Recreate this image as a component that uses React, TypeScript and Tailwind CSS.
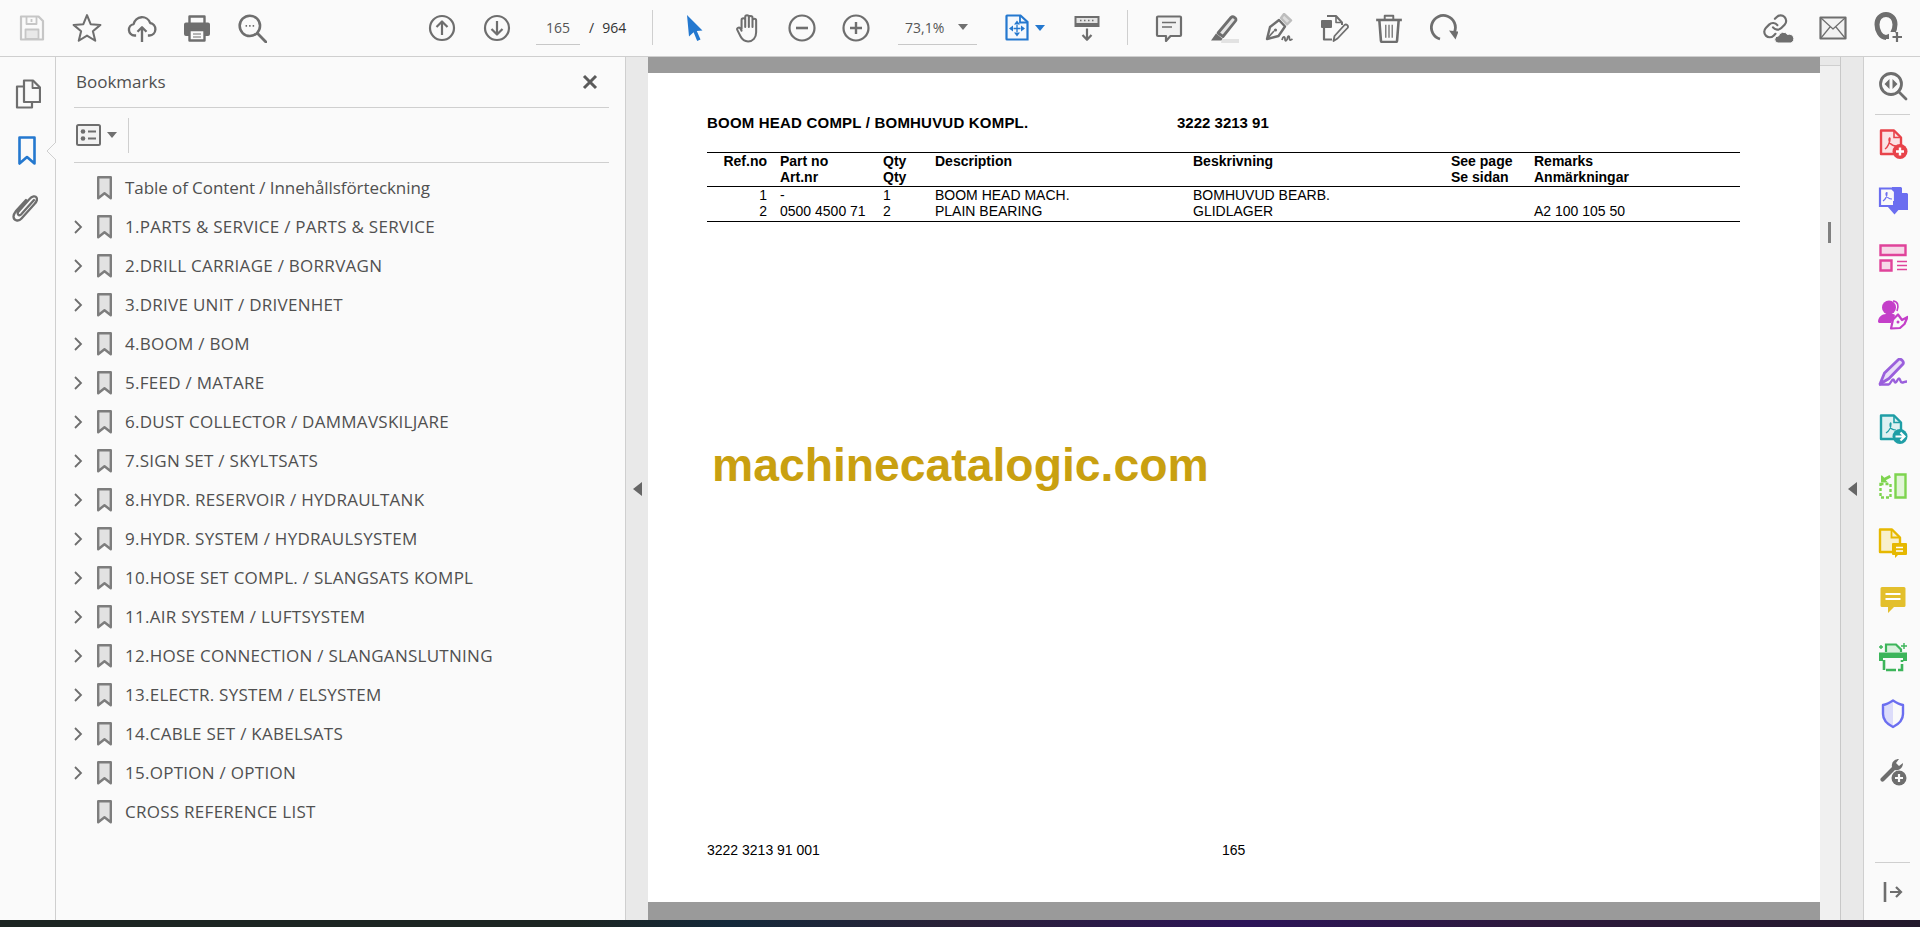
import type { ReactNode } from "react";

const G = "#6e6e6e";

function Ico({ children, size = 28 }: { children: ReactNode; size?: number }) {
	return (
		<svg width={size} height={size} viewBox="0 0 28 28" fill="none" stroke={G} strokeWidth="2" strokeLinejoin="round">
			{children}
		</svg>
	);
}

function Cell({ children, w = "w-[55px]" }: { children: ReactNode; w?: string }) {
	return <div className={`${w} flex shrink-0 items-center justify-center`}>{children}</div>;
}

function Caret({ color = "#707070" }: { color?: string }) {
	return (
		<svg width="10" height="6" viewBox="0 0 10 6">
			<path d="M0 0h10L5 6z" fill={color} />
		</svg>
	);
}

function Triangle() {
	return (
		<svg width="9" height="14" viewBox="0 0 9 14">
			<path d="M9 0v14L0 7z" fill="#666" />
		</svg>
	);
}

function BookmarkIcon() {
	return (
		<svg width="15" height="24" viewBox="0 0 15 24">
			<path d="M1.200 1.200h12.600v21l-6.300-5-6.300 5z" fill="#e2e2e2" stroke="#7d7d7d" strokeWidth="2.400" strokeLinejoin="round" />
		</svg>
	);
}

const bookmarks: { label: string; expand: boolean }[] = [
	{ label: "Table of Content / Innehållsförteckning", expand: false },
	{ label: "1.PARTS & SERVICE / PARTS & SERVICE", expand: true },
	{ label: "2.DRILL CARRIAGE / BORRVAGN", expand: true },
	{ label: "3.DRIVE UNIT / DRIVENHET", expand: true },
	{ label: "4.BOOM / BOM", expand: true },
	{ label: "5.FEED / MATARE", expand: true },
	{ label: "6.DUST COLLECTOR / DAMMAVSKILJARE", expand: true },
	{ label: "7.SIGN SET / SKYLTSATS", expand: true },
	{ label: "8.HYDR. RESERVOIR / HYDRAULTANK", expand: true },
	{ label: "9.HYDR. SYSTEM / HYDRAULSYSTEM", expand: true },
	{ label: "10.HOSE SET COMPL. / SLANGSATS KOMPL", expand: true },
	{ label: "11.AIR SYSTEM / LUFTSYSTEM", expand: true },
	{ label: "12.HOSE CONNECTION / SLANGANSLUTNING", expand: true },
	{ label: "13.ELECTR. SYSTEM / ELSYSTEM", expand: true },
	{ label: "14.CABLE SET / KABELSATS", expand: true },
	{ label: "15.OPTION / OPTION", expand: true },
	{ label: "CROSS REFERENCE LIST", expand: false },
];

function Toolbar() {
	return (
		<header className="flex h-[57px] shrink-0 items-center border-b border-[#cfcfcf] bg-[#fafafa] pb-[1px] pl-[4px]">
			<Cell>
				<Ico>
					<path d="M3 2.500h17.500l4.500 4.500v18.500H3z" stroke="#c6c6c6" strokeWidth="2.200" />
					<path d="M8.500 3v7h10V3M13.500 5v3" stroke="#c6c6c6" strokeWidth="1.800" />
					<path d="M7.500 15.500h13V25h-13z" fill="#e8e8e8" stroke="#c6c6c6" strokeWidth="1.800" />
				</Ico>
			</Cell>
			<Cell>
				<Ico size={30}>
					<path d="M14 2l3.400 8.400 9.100.7-7 5.900 2.200 8.900L14 21.100 6.300 25.900l2.200-8.900-7-5.900 9.100-.7z" strokeWidth="1.900" />
				</Ico>
			</Cell>
			<Cell>
				<Ico size={30}>
					<path d="M8.500 21H7a5.400 5.400 0 0 1-.8-10.700A8 8 0 0 1 21.600 9.300 5.900 5.900 0 0 1 21 21h-1.500" strokeWidth="2.200" />
					<path d="M14 27V13.500M9.800 17.500l4.200-4.200 4.200 4.200" strokeWidth="2.200" />
				</Ico>
			</Cell>
			<Cell>
				<Ico>
					<path d="M6.500 9V2.500h15V9" strokeWidth="2.400" />
					<path d="M3 8.500h22a2 2 0 0 1 2 2V20a2 2 0 0 1-2 2h-3v-6H6v6H3a2 2 0 0 1-2-2v-9.500a2 2 0 0 1 2-2z" fill={G} stroke="none" />
					<path d="M6.500 16h15v10.500h-15z" fill="#fafafa" strokeWidth="2.400" />
					<path d="M10 20h8M10 23h8" strokeWidth="1.200" />
				</Ico>
			</Cell>
			<Cell>
				<Ico size={30}>
					<circle cx="12" cy="12" r="9.500" strokeWidth="2.400" />
					<path d="M19 19l8 8" strokeWidth="2.600" strokeLinecap="round" />
					<path d="M8 12h1.400M11.300 12h1.400M14.600 12h1.400" strokeWidth="1.600" />
				</Ico>
			</Cell>
			<div className="w-[135px] shrink-0" />
			<Cell>
				<Ico>
					<circle cx="14" cy="14" r="12" strokeWidth="2.200" />
					<path d="M14 21V7.500M8.500 13L14 7.500l5.500 5.500" strokeWidth="2.200" />
				</Ico>
			</Cell>
			<Cell>
				<Ico>
					<circle cx="14" cy="14" r="12" strokeWidth="2.200" />
					<path d="M14 7v13.500M8.500 15l5.500 5.500 5.500-5.500" strokeWidth="2.200" />
				</Ico>
			</Cell>
			<div className="ml-[12px] flex h-[35px] w-[44px] shrink-0 items-center justify-center border-b border-[#c8c8c8] text-[14px] text-[#555]">165</div>
			<div className="flex w-[72px] shrink-0 items-center pl-[9px] text-[14px] text-[#333]">
				<span>/</span>
				<span className="ml-[8px]">964</span>
			</div>
			<div className="h-[35px] w-px shrink-0 bg-[#cfcfcf]" />
			<div className="w-[14px] shrink-0" />
			<Cell w="w-[54px]">
				<svg width="28" height="28" viewBox="0 0 28 28">
					<path d="M7 1l15.500 15.500-5.700.5 3.700 8.500-3.300 1.500-3.600-8.700L9 22.500z" fill="#2478cf" />
				</svg>
			</Cell>
			<Cell w="w-[54px]">
				<svg width="30" height="30" viewBox="0 0 28 28" fill="none" stroke={G} strokeWidth="1.900" strokeLinecap="round" strokeLinejoin="round">
					<path d="M8 15V6.500a1.700 1.700 0 0 1 3.400 0V13M11.400 13V3.700a1.700 1.700 0 0 1 3.400 0V13M14.800 13V4.500a1.700 1.700 0 0 1 3.400 0V13M18.200 13V7a1.700 1.700 0 0 1 3.400 0v11c0 5-3 8.500-7.500 8.500-3.500 0-5.500-1.500-7-4.500l-3-6c-1-2 1.500-3.200 2.700-1.700L8 16.500" />
				</svg>
			</Cell>
			<Cell w="w-[54px]">
				<Ico>
					<circle cx="14" cy="14" r="12.500" strokeWidth="2.200" />
					<path d="M8 14h12" strokeWidth="2.600" />
				</Ico>
			</Cell>
			<Cell w="w-[54px]">
				<Ico>
					<circle cx="14" cy="14" r="12.500" strokeWidth="2.200" />
					<path d="M8 14h12M14 8v12" strokeWidth="2.400" />
				</Ico>
			</Cell>
			<div className="ml-[15px] flex h-[35px] w-[79px] shrink-0 items-center justify-between border-b border-[#c8c8c8] pr-[9px] pl-[7px] text-[14px] text-[#555]">
				<span>73,1%</span>
				<Caret />
			</div>
			<div className="ml-[28px] flex w-[40px] shrink-0 items-center gap-[6px]">
				<svg width="24" height="27" viewBox="0 0 24 27" fill="none">
					<path d="M2 1.500h13.500L22.500 8v17.500H2a.5.5 0 0 1-.5-.5V2a.5.5 0 0 1 .5-.5z" stroke="#2478cf" strokeWidth="2.200" fill="#f4f8fd" />
					<path d="M15 2v6.500h7" stroke="#2478cf" strokeWidth="1.800" />
					<path d="M12 11v7M8.500 14.500h7" stroke="#2478cf" strokeWidth="1.300" />
					<path d="M12 6.500L9 10.500h6zM12 22.500l-3-4h6zM4 14.500l4-3v6zM20 14.500l-4-3v6z" fill="#2478cf" />
				</svg>
				<Caret color="#2478cf" />
			</div>
			<Cell w="w-[54px] ml-[15px]">
				<Ico>
					<path d="M1.500 2h25v11h-25z" fill={G} stroke="none" />
					<path d="M3.500 4h21v5h-21z" fill="#e4e4e4" stroke="none" />
					<path d="M7 6.500h1.500M11 6.500h1.500M15 6.500h1.500M19 6.500h1.500" stroke={G} strokeWidth="1.600" />
					<path d="M14 14.500v11M9.500 21l4.500 4.800 4.500-4.800" strokeWidth="2.200" />
				</Ico>
			</Cell>
			<div className="ml-[13px] h-[35px] w-px shrink-0 bg-[#cfcfcf]" />
			<div className="w-[13px] shrink-0" />
			<Cell>
				<Ico>
					<path d="M3 2.500h22a1 1 0 0 1 1 1V21a1 1 0 0 1-1 1h-9.500L11 27v-5H3a1 1 0 0 1-1-1V3.500a1 1 0 0 1 1-1z" fill="#f2f2f2" strokeWidth="2.200" />
					<path d="M7 8.500h14M7 13h10" strokeWidth="1.500" />
				</Ico>
			</Cell>
			<Cell>
				<svg width="30" height="30" viewBox="0 0 30 30">
					<path d="M9 20L22 4.500c2-2 6.500 1 4.500 3.500L14 23.500z" fill="#e4e4e4" stroke={G} strokeWidth="2.800" strokeLinejoin="round" />
					<path d="M7 20.500l7 5.500-1.500 1.500H2z" fill={G} />
					<path d="M13 26h17v4H12z" fill="#e2e2e2" />
				</svg>
			</Cell>
			<Cell>
				<svg width="30" height="30" viewBox="0 0 30 30" fill="none" stroke={G} strokeWidth="2.400" strokeLinejoin="round">
					<path d="M6 14l9-7 6 6.500-6.500 9.500L3 26z" />
					<path d="M3 26l7-8" strokeWidth="1.600" />
					<circle cx="11.500" cy="17" r="1.600" fill={G} stroke="none" />
					<path d="M17 5l3-4 7 6.500-4 4z" fill="#ddd" stroke="#bdbdbd" />
					<path d="M18 27c1-4 3-4 3-1s2 2 2.500-1 2-2 2 .5 1.500 1.500 3 .5" strokeWidth="1.800" />
				</svg>
			</Cell>
			<Cell>
				<svg width="30" height="30" viewBox="0 0 30 30" fill="none" stroke={G} strokeWidth="2" strokeLinejoin="round">
					<path d="M8 3h9l6 6.500V12" />
					<path d="M17 3v6.500h6" strokeWidth="1.600" />
					<path d="M3 8h9v6H3z" fill={G} stroke={G} strokeWidth="2" />
					<path d="M5 14v12.500h8" strokeWidth="2.200" />
					<path d="M14.500 28l1-5 10-11c2-1.500 4.500 1 3 3l-10 10.500z" strokeWidth="1.800" fill="#f2f2f2" />
				</svg>
			</Cell>
			<Cell>
				<Ico size={30}>
					<path d="M2 6.500h24" strokeWidth="2.400" />
					<path d="M10 6V2.500h8V6" strokeWidth="1.800" />
					<path d="M5 7l1.500 19a1 1 0 0 0 1 1h13a1 1 0 0 0 1-1L23 7" strokeWidth="2.400" />
					<path d="M11 11v12M14 11v12M17 11v12" strokeWidth="1.200" />
				</Ico>
			</Cell>
			<Cell>
				<Ico>
					<path d="M10 25A12 12 0 1 1 24.500 18" strokeWidth="2.800" />
					<path d="M19 16.500l9.500 1-3 8z" fill={G} stroke="none" />
				</Ico>
			</Cell>
			<div className="w-[279px] shrink-0" />
			<Cell>
				<svg width="32" height="32" viewBox="0 0 32 32">
					<g transform="scale(1.100) translate(0 1)" fill="none" stroke={G} strokeWidth="2" strokeLinecap="round">
						<path d="M10 13a5 5 0 0 0 7.540.54l3-3a5 5 0 0 0-7.070-7.070l-1.720 1.710" />
						<path d="M14 11a5 5 0 0 0-7.540-.54l-3 3a5 5 0 0 0 7.070 7.070l1.710-1.710" />
					</g>
					<path d="M16 31a3.500 3.500 0 0 1 .5-7 5 5 0 0 1 9-1.500 4.500 4.500 0 0 1 3.500 8.500z" fill={G} stroke="#fafafa" />
				</svg>
			</Cell>
			<Cell>
				<Ico>
					<path d="M1.500 3.500h25v21h-25z" fill="#f2f2f2" strokeWidth="2.200" />
					<path d="M2 4l12 11 12-11M2 24l9-11M26 24l-9-11" strokeWidth="1.200" />
				</Ico>
			</Cell>
			<Cell>
				<svg width="30" height="32" viewBox="0 0 30 32" fill="none">
					<path d="M13 2.500c5.500 0 9 4.500 9 10 0 6-3.500 13-9 13s-9-7-9-13c0-5.500 3.500-10 9-10z" stroke={G} strokeWidth="5" />
					<path d="M13 27h5v3h-5zM16 20h6v7h-6z" fill="#fafafa" />
					<path d="M24 20v10M19.500 25H29" stroke={G} strokeWidth="2.200" />
				</svg>
			</Cell>
		</header>
	);
}

function LeftRail() {
	return (
		<nav className="relative flex w-[56px] shrink-0 flex-col border-r border-[#cfcfcf] bg-[#fafafa] pt-[8px]">
			<div className="flex h-[57px] items-center justify-center">
				<svg width="26" height="30" viewBox="0 0 26 30" fill="none" stroke={G} strokeWidth="2.200" strokeLinejoin="round">
					<path d="M9 1.500h9l7 7V23H9z" />
					<path d="M17.500 2v7H25" strokeWidth="1.800" />
					<path d="M9 7.500H2V28.500h15V23" />
				</svg>
			</div>
			<div className="flex h-[57px] items-center justify-center pt-[1px] pr-[1px]">
				<svg width="18" height="30" viewBox="0 0 18 30" fill="none">
					<path d="M1.500 1.500h15v26L9 21l-7.500 6.500z" stroke="#2478cf" strokeWidth="2.600" strokeLinejoin="round" />
				</svg>
			</div>
			<div className="flex h-[57px] items-center justify-center pr-[5px]">
				<svg width="26" height="28" viewBox="0 0 26 28" fill="none" stroke={G} strokeWidth="2.300" strokeLinecap="round">
					<path d="M22 6L9 20.500c-2 2-4.500-.5-2.500-3L17.500 5c2.500-3 6-3.500 7-1.500 1 2 0 4.500-2 6.500L9.500 24.500c-3 3.500-8 2-8-2 0-2 1-3.500 2.500-5.500L14 6" />
				</svg>
			</div>
			<svg className="absolute top-[85px] -right-px" width="10" height="18" viewBox="0 0 10 18">
				<path d="M10 0L1 9l9 9" fill="#fafafa" stroke="#cfcfcf" />
			</svg>
		</nav>
	);
}

function BookmarksPanel() {
	return (
		<aside className="flex w-[570px] shrink-0 flex-col border-r border-[#cfcfcf] bg-[#fafafa]">
			<div className="mr-[16px] ml-[18px] flex h-[51px] shrink-0 items-center justify-between border-b border-[#cfcfcf] pb-[1px] pl-[2px]">
				<span className="text-[17px] text-[#505050]">Bookmarks</span>
				<svg className="mr-[11px]" width="16" height="16" viewBox="0 0 16 16">
					<path d="M2 2l12 12M14 2L2 14" stroke="#5a5a5a" strokeWidth="3" />
				</svg>
			</div>
			<div className="mr-[16px] ml-[18px] flex h-[55px] shrink-0 items-center border-b border-[#cfcfcf] pl-[2px]">
				<svg width="25" height="22" viewBox="0 0 25 22" fill="none">
					<rect x="1" y="1" width="23" height="20" rx="1.500" stroke={G} strokeWidth="2" fill="#f2f2f2" />
					<circle cx="7" cy="7.500" r="2.300" fill={G} />
					<circle cx="7" cy="14.500" r="2.300" fill={G} />
					<path d="M12 7.500h8M12 14.500h8" stroke={G} strokeWidth="2" />
				</svg>
				<div className="ml-[6px]"><Caret /></div>
				<div className="ml-[11px] h-[35px] w-px bg-[#cfcfcf]" />
			</div>
			<ul className="mt-[5px] flex flex-col">
				{bookmarks.map((item) => (
					<li className="flex h-[39px] items-center pl-[14px]" key={item.label}>
						<div className="flex w-[15px] justify-center">
							{item.expand ? (
								<svg width="10" height="16" viewBox="0 0 10 16" fill="none">
									<path d="M2 2l6 6-6 6" stroke={G} strokeWidth="1.800" />
								</svg>
							) : null}
						</div>
						<div className="ml-[12px]"><BookmarkIcon /></div>
						<span
							className={
								item.label.startsWith("Table")
									? "ml-[13px] text-[17px] tracking-[-0.08px] text-[#505050]"
									: "ml-[13px] text-[17px] tracking-[0.27px] text-[#505050]"
							}
						>
							{item.label}
						</span>
					</li>
				))}
			</ul>
		</aside>
	);
}

function PageView() {
	const rows = [
		["1", "-", "1", "BOOM HEAD MACH.", "BOMHUVUD BEARB.", "", ""],
		["2", "0500 4500 71", "2", "PLAIN BEARING", "GLIDLAGER", "", "A2 100 105 50"],
	];
	const colClass = "grid grid-cols-[73px_103px_52px_258px_258px_83px_1fr]";
	return (
		<main className="flex w-[1172px] shrink-0 flex-col bg-white font-['Liberation_Sans',Arial,sans-serif] text-[14px] leading-[16px] text-black">
			<div className="h-[16px] shrink-0 bg-[#9a9a9a]" />
			<div className="flex-1 pl-[59px]">
				<div className="mt-[42px] flex text-[15px] font-bold">
					<span className="w-[470px] tracking-[0.2px]">BOOM HEAD COMPL / BOMHUVUD KOMPL.</span>
					<span>3222 3213 91</span>
				</div>
				<div className="mt-[21px] w-[1033px] border-y border-black pb-px">
					<div className={`${colClass} font-bold`}>
						<span className="pr-[13px] text-right">Ref.no</span>
						<span>Part no</span>
						<span>Qty</span>
						<span>Description</span>
						<span>Beskrivning</span>
						<span>See page</span>
						<span>Remarks</span>
						<span />
						<span>Art.nr</span>
						<span>Qty</span>
						<span />
						<span />
						<span>Se sidan</span>
						<span>Anmärkningar</span>
					</div>
				</div>
				<div className="w-[1033px] border-b border-black pb-[2px]">
					{rows.map((row) => (
						<div className={colClass} key={row[0]}>
							<span className="pr-[13px] text-right">{row[0]}</span>
							{row.slice(1).map((cell, i) => (
								<span key={i}>{cell}</span>
							))}
						</div>
					))}
				</div>
				<div className="mt-[215px] ml-[5px] h-[56px] text-[46.3px] leading-[56px] font-bold text-[#c9a010]">machinecatalogic.com</div>
				<div className="mt-[349px] flex">
					<span className="w-[515px]">3222 3213 91 001</span>
					<span>165</span>
				</div>
			</div>
			<div className="h-[18px] shrink-0 bg-[#9a9a9a]" />
		</main>
	);
}

function Scrollbar() {
	return (
		<div className="flex w-[21px] shrink-0 flex-col border-r border-[#c8c8c8] bg-[#f0f0f0]">
			<div className="h-[9px] border-b border-[#cfcfcf] bg-[#e8e8e8]" />
			<div className="mt-[156px] ml-[8px] h-[21px] w-[3px] bg-[#808080]" />
		</div>
	);
}

function RailCell({ children }: { children: ReactNode }) {
	return <div className="flex h-[57px] shrink-0 items-center justify-center">{children}</div>;
}

function RightRail() {
	return (
		<nav className="flex w-[58px] shrink-0 flex-col border-l border-[#cfcfcf] bg-[#fafafa]">
			<RailCell>
				<svg width="30" height="30" viewBox="0 0 30 30" fill="none" stroke={G} strokeWidth="2.800">
					<circle cx="13" cy="13" r="10.500" />
					<path d="M20.500 20.500l7.500 7.500" strokeLinecap="round" />
					<path d="M11.500 8l-5 5 5 5zM14.500 8l5 5-5 5z" fill={G} stroke="none" />
				</svg>
			</RailCell>
			<div className="mx-[11px] h-px shrink-0 bg-[#cfcfcf]" />
			<RailCell>
				<svg width="30" height="30" viewBox="0 0 30 30" fill="none">
					<path d="M3 1.500h13l7 7V25H3z" stroke="#e8434a" strokeWidth="2.400" fill="#fbe3e4" strokeLinejoin="round" />
					<path d="M16 2v6.500h7" stroke="#e8434a" strokeWidth="1.600" />
					<path d="M7 20c3-2 5-7 5-10 0-2-1-1-1 1 0 3 3 6 7 6" stroke="#e8434a" strokeWidth="1.400" />
					<circle cx="22" cy="22.500" r="7.500" fill="#e8434a" />
					<path d="M18 22.500h8M22 18.500v8" stroke="#fff" strokeWidth="2.400" />
				</svg>
			</RailCell>
			<RailCell>
				<svg width="30" height="30" viewBox="0 0 30 30">
					<path d="M14 1h9l7 7v16H14z" fill="#6b6ef0" />
					<path d="M24 1v6h6z" fill="#fafafa" />
					<path d="M2 2.500h12l3 3V20H2z" fill="#fafafa" stroke="#6b6ef0" strokeWidth="2.200" />
					<path d="M5 15c3-2 4-5 4-8 0-1-1 0-1 1 0 3 3 5 6 5" fill="none" stroke="#6b6ef0" strokeWidth="1.200" />
					<path d="M16.500 15v7" stroke="#6b6ef0" strokeWidth="3" />
					<path d="M9.500 20.500h14l-7 8z" fill="#6b6ef0" />
				</svg>
			</RailCell>
			<RailCell>
				<svg width="28" height="28" viewBox="0 0 28 28">
					<path d="M1.500 1.500h25v9.500h-25z" fill="#f6d9e8" stroke="#e0439a" strokeWidth="2.400" />
					<path d="M1.500 16.500h11v10h-11z" fill="#f6d9e8" stroke="#e0439a" strokeWidth="2.400" />
					<path d="M18 17.500h10M18 21.500h10M18 25.500h10" stroke="#e0439a" strokeWidth="1.400" />
				</svg>
			</RailCell>
			<RailCell>
				<svg width="30" height="30" viewBox="0 0 30 30">
					<circle cx="11" cy="7.500" r="7" fill="#c43fc9" />
					<path d="M0 22c0-5 4-8 8-8h7c3 0 2 3 0 5l-2 4H1z" fill="#c43fc9" />
					<path d="M15 1c5 0 6 5 4 10" fill="none" stroke="#c43fc9" strokeWidth="1.600" />
					<path d="M13 28.500l2-9 5-5 4 5.500 5.500-3-3 7-4.500 4z" fill="#fafafa" stroke="#c43fc9" strokeWidth="2.200" strokeLinejoin="round" />
					<circle cx="20" cy="22" r="1.500" fill="#c43fc9" />
				</svg>
			</RailCell>
			<RailCell>
				<svg width="30" height="28" viewBox="0 0 30 28" fill="none">
					<path d="M2 26L6.500 15 20.500 1.500c2-1.500 6 2 4.500 4.500L11 20.500z" fill="#e9ddf8" stroke="#9a5fdc" strokeWidth="2.800" strokeLinejoin="round" />
					<path d="M1 26.500h9.500c2 0 3-5 4.500-5s1 3 2.500 3 2-4 3.500-4 1 4 3 4 2-1 5-1" stroke="#9a5fdc" strokeWidth="2.400" />
				</svg>
			</RailCell>
			<RailCell>
				<svg width="30" height="30" viewBox="0 0 30 30" fill="none">
					<path d="M3 1.500h13l7 7V25H3z" fill="#dff1f2" stroke="#1f9ea6" strokeWidth="2.400" strokeLinejoin="round" />
					<path d="M16 2v6.500h7" stroke="#1f9ea6" strokeWidth="1.600" />
					<path d="M8 19c3-2 5-6 5-9 0-2-1-1-1 1 0 3 2 5 6 5" stroke="#1f9ea6" strokeWidth="1.200" />
					<circle cx="22" cy="22.500" r="7.500" fill="#1f9ea6" />
					<path d="M17.500 22.500h8M22.500 18.500l4 4-4 4" stroke="#fff" strokeWidth="2.200" />
				</svg>
			</RailCell>
			<RailCell>
				<svg width="28" height="26" viewBox="0 0 28 26" fill="none">
					<path d="M16.500 1.500h10v23h-10z" fill="#e2f5d8" stroke="#7ed44f" strokeWidth="2.400" />
					<path d="M1.500 11h10v13.500h-10z" stroke="#7ed44f" strokeWidth="2.400" strokeDasharray="3 2" />
					<path d="M2 2.500V9.500h7l-2.200-2.200L12 4.500 10.500 2 5.300 4.800 3 2.500z" fill="#7ed44f" />
				</svg>
			</RailCell>
			<RailCell>
				<svg width="30" height="30" viewBox="0 0 30 30">
					<path d="M2 1.500h12l8 8V24H2z" fill="#f8f0cc" stroke="#e6b800" strokeWidth="2.400" strokeLinejoin="round" />
					<path d="M13.500 2v7.500h8" fill="none" stroke="#e6b800" strokeWidth="1.800" />
					<path d="M15 15h13a1 1 0 0 1 1 1v10a1 1 0 0 1-1 1h-8l-3 3v-3h-2a1 1 0 0 1-1-1V16a1 1 0 0 1 1-1z" fill="#e6b800" />
					<path d="M18 19.500h7M18 23h7" stroke="#fff" strokeWidth="1.500" />
				</svg>
			</RailCell>
			<RailCell>
				<svg width="26" height="28" viewBox="0 0 26 28">
					<path d="M2 1h22a1.500 1.500 0 0 1 1.500 1.500v17a1.500 1.500 0 0 1-1.500 1.500H14l-6 6v-6H2A1.500 1.500 0 0 1 .5 19.500v-17A1.500 1.500 0 0 1 2 1z" fill="#e3bf2c" />
					<path d="M5.500 8h15M5.500 13h15" stroke="#fff" strokeWidth="2.200" />
				</svg>
			</RailCell>
			<RailCell>
				<svg width="30" height="30" viewBox="0 0 30 30" fill="none">
					<path d="M8 10V2.500h10l5 5V10" fill="#d9f1dd" stroke="#3cb55a" strokeWidth="2.200" />
					<path d="M1 10.500h28V19h-4v-3H5v3H1z" fill="#3cb55a" />
					<path d="M6 18v10h18V18" stroke="#3cb55a" strokeWidth="2.600" strokeDasharray="10 2" />
					<path d="M26 1v6M23 4h6M3 3v4M1 5h4" stroke="#3cb55a" strokeWidth="1.400" />
				</svg>
			</RailCell>
			<RailCell>
				<svg width="24" height="30" viewBox="0 0 24 30" fill="none">
					<path d="M12 2v25C6 25 2 20 2 15V6c4 0 7-2 10-4z" fill="#dcdcfa" />
					<path d="M12 1.500c3 2 6 4 10 4.500v9c0 6-4 10-10 13C6 25 2 21 2 15V6c4-.5 7-2.500 10-4.500z" stroke="#6b6ef0" strokeWidth="2.400" strokeLinejoin="round" />
				</svg>
			</RailCell>
			<RailCell>
				<svg width="30" height="30" viewBox="0 0 30 30">
					<path d="M3 22L14 11c-1-4 2-8 7-8l-3 4 3 3 4-3c0 5-4 8-8 7L6 25c-2 2-5-1-3-3z" fill={G} />
					<circle cx="21" cy="22" r="7.500" fill={G} />
					<path d="M17 22h8M21 18v8" stroke="#fafafa" strokeWidth="2.200" />
				</svg>
			</RailCell>
			<div className="flex-1" />
			<div className="mx-[11px] h-px shrink-0 bg-[#cfcfcf]" />
			<RailCell>
				<svg width="20" height="20" viewBox="0 0 20 20" fill="none" stroke={G} strokeWidth="2.200">
					<path d="M2 0v20" strokeWidth="2.600" />
					<path d="M7 10h11M13 5l5 5-5 5" />
				</svg>
			</RailCell>
		</nav>
	);
}

export default function App() {
	return (
		<div className="flex h-[927px] w-[1920px] flex-col overflow-hidden bg-[#fafafa] font-['Open_Sans',sans-serif]">
			<Toolbar />
			<div className="flex min-h-0 flex-1">
				<LeftRail />
				<BookmarksPanel />
				<div className="flex w-[22px] shrink-0 items-center justify-center bg-[#e9e9e9]">
					<Triangle />
				</div>
				<PageView />
				<Scrollbar />
				<div className="flex w-[22px] shrink-0 items-center justify-center bg-[#e9e9e9]">
					<Triangle />
				</div>
				<RightRail />
			</div>
			<div className="h-[7px] shrink-0 bg-[linear-gradient(90deg,#1c2522_0%,#1c2522_30%,#14293a_38%,#2a2138_50%,#2c1458_65%,#2d1a3c_80%,#231a2c_100%)]" />
		</div>
	);
}
